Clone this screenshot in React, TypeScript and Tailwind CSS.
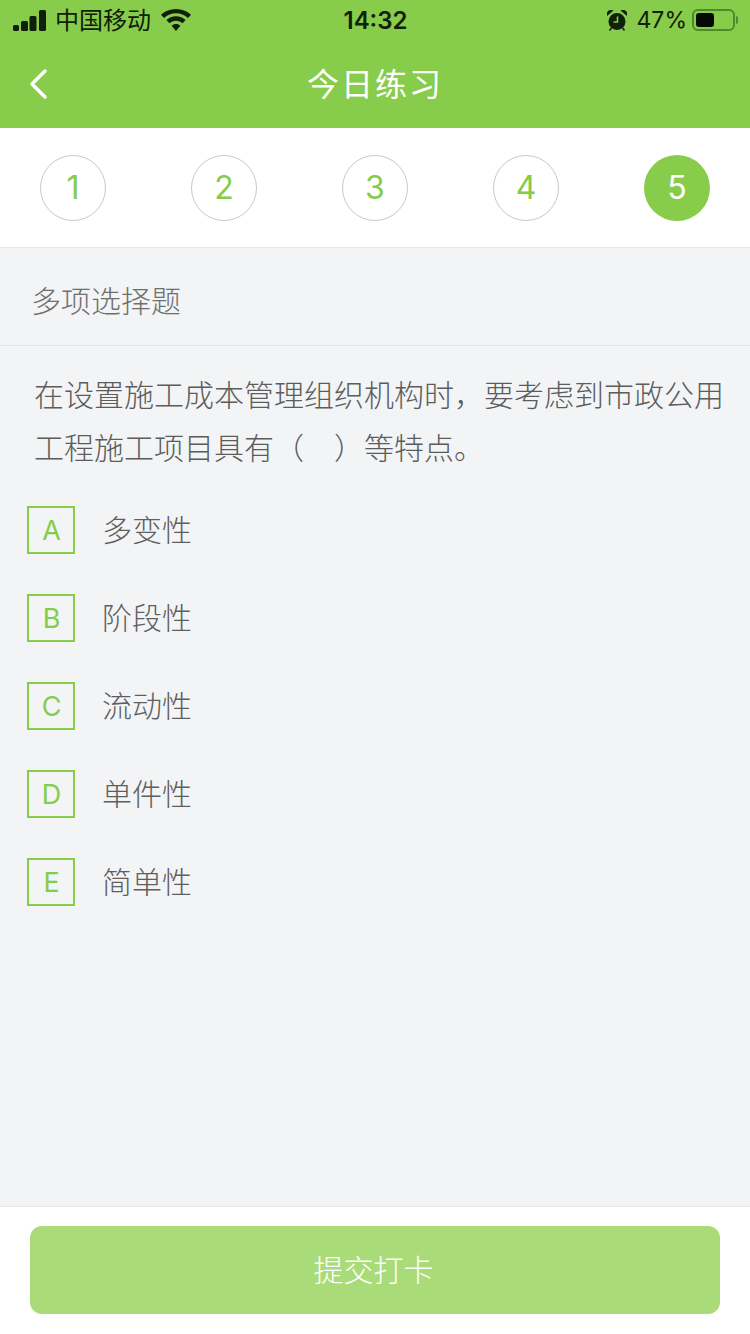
const font = { fontFamily: '"Inter", "Noto Sans CJK SC", sans-serif' };

const steps = [1, 2, 3, 4, 5];
const options = [
  { key: "A", label: "多变性" },
  { key: "B", label: "阶段性" },
  { key: "C", label: "流动性" },
  { key: "D", label: "单件性" },
  { key: "E", label: "简单性" },
];

function StatusBar() {
  return (
    <div className="flex h-10 items-center justify-between pl-[13px] pr-[12px] text-[#10200a]">
      <div className="flex w-[200px] items-center">
        <svg width="33" height="21" viewBox="0 0 33 21" fill="currentColor">
          <rect x="0" y="15" width="6" height="6" rx="1.5" />
          <rect x="8" y="11" width="7" height="10" rx="1.5" />
          <rect x="16.500" y="6" width="7" height="15" rx="1.5" />
          <rect x="26" y="0" width="7" height="21" rx="1.5" />
        </svg>
        <span className="ml-[9px] pt-[2px] text-[24px] leading-none">中国移动</span>
        <svg className="ml-[10px]" width="30" height="22" viewBox="0 0 30 22" fill="currentColor">
          <path d="M15 0c5.800 0 11 2.200 15 5.800l-3 3.200C23.800 6.100 19.600 4.300 15 4.300S6.200 6.100 3 9L0 5.800C4 2.200 9.200 0 15 0z" />
          <path d="M15 7.300c3.700 0 7 1.400 9.600 3.700l-3.100 3.300c-1.700-1.500-4-2.500-6.500-2.500s-4.800 1-6.500 2.500L5.400 11C8 8.700 11.300 7.300 15 7.300z" />
          <path d="M15 15c1.700 0 3.200.6 4.400 1.700L15 22l-4.400-5.300C11.800 15.600 13.300 15 15 15z" />
        </svg>
      </div>
      <span className="pt-[1px] text-[24px] leading-none font-semibold">14:32</span>
      <div className="flex w-[200px] items-center justify-end">
        <svg width="20" height="21" viewBox="0 0 20 21" fill="currentColor">
          <circle cx="10" cy="11.500" r="8.500" />
          <path d="M0 6 A4.500 4.500 0 0 1 6.500 0.500 Z M20 6 A4.500 4.500 0 0 0 13.500 0.500 Z" />
          <path d="M4.500 18l-2 2.500M15.500 18l2 2.500" stroke="currentColor" strokeWidth="1.500" />
          <path d="M10.500 6.500v5.500H6.500" stroke="#87cc4a" strokeWidth="1.600" fill="none" />
        </svg>
        <span className="ml-[10px] pt-[1px] text-[23px] leading-none">47%</span>
        <div className="ml-[5px] flex h-[22px] w-[43px] items-center rounded-[6px] border-2 border-[#4f8a2c] p-[2px]">
          <div className="h-full w-[18px] rounded-[3px] bg-[#050a03]" />
        </div>
        <div className="ml-[1px] h-[8px] w-[2px] rounded-r-sm bg-[#4f8a2c]" />
      </div>
    </div>
  );
}

function NavBar() {
  return (
    <div className="relative flex h-[88px] items-center justify-center pt-[2px]">
      <svg className="absolute left-[28px] top-[27px]" width="21" height="34" viewBox="0 0 21 34" fill="none" stroke="#fff" strokeWidth="3.500" strokeLinecap="round" strokeLinejoin="round">
        <path d="M17 4 L4 17 L17 30" />
      </svg>
      <h1 className="text-[32px] leading-none tracking-[2px] text-white">今日练习</h1>
    </div>
  );
}

export default function App() {
  return (
    <div className="flex h-[1334px] w-[750px] flex-col overflow-hidden bg-[#f2f4f6]" style={font}>
      <div className="bg-[#87cc4a]">
        <StatusBar />
        <NavBar />
      </div>

      <div className="flex h-[120px] items-center justify-between border-b border-[#e6e6e6] bg-white pt-[1px] pl-[40px] pr-[40px]">
        {steps.map((n) =>
          n === 5 ? (
            <div key={n} className="flex h-[66px] w-[66px] items-center justify-center rounded-full bg-[#87cc4a] text-[32px] text-white">
              {n}
            </div>
          ) : (
            <div key={n} className="flex h-[66px] w-[66px] items-center justify-center rounded-full border border-[#c8c8c8] text-[32px] text-[#86cc4b]">
              {n}
            </div>
          ),
        )}
      </div>

      <div className="flex h-[98px] items-center border-b border-[#e6e6e6] pl-[31px] pt-[8px] text-[30px] leading-none font-light text-[#6f6f6f]">
        多项选择题
      </div>

      <p className="mt-[23px] pl-[34px] pr-[20px] text-[30px] leading-[53px] font-light text-[#5c5c5c]">
        在设置施工成本管理组织机构时，要考虑到市政公用工程施工项目具有（　）等特点。
      </p>

      <div className="mt-[31px] flex flex-1 flex-col gap-[40px] pl-[27px]">
        {options.map((o) => (
          <div key={o.key} className="flex items-center">
            <div className="flex h-[48px] w-[48px] items-center justify-center border-2 border-[#87cc4a] pt-[2px] pl-[1px] text-[27px] text-[#86cc4b]">
              {o.key}
            </div>
            <span className="ml-[28px] -translate-x-[1px] text-[30px] leading-none font-light text-[#5f5f5f]">{o.label}</span>
          </div>
        ))}
      </div>

      <div className="flex h-[128px] flex-col border-t border-[#e6e8ec] bg-white px-[30px] pt-[19px]">
        <button className="flex h-[88px] w-full items-center justify-center rounded-[12px] bg-[#a9dc79] pr-[3px] text-[30px] font-light text-white">
          提交打卡
        </button>
      </div>
    </div>
  );
}
